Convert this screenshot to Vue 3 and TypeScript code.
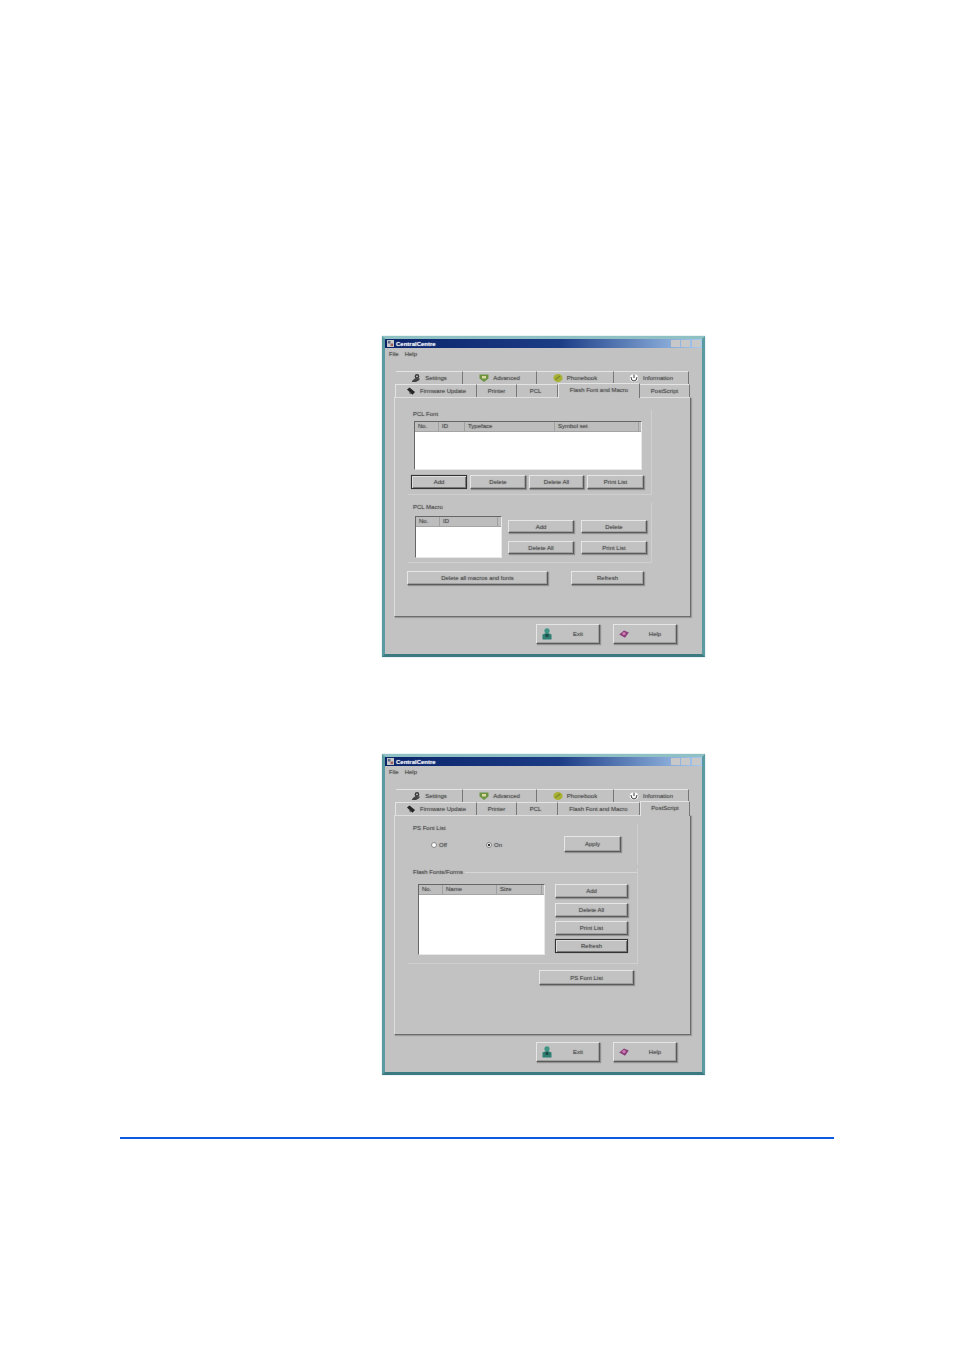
<script setup lang="ts">
interface Tab { label: string; width: number; icon?: string }
const topTabs: Tab[] = [
  { label: 'Settings', width: 67, icon: 'settings' },
  { label: 'Advanced', width: 74, icon: 'advanced' },
  { label: 'Phonebook', width: 77, icon: 'phonebook' },
  { label: 'Information', width: 75, icon: 'info' },
]
const lowerTabs: Tab[] = [
  { label: 'Firmware Update', width: 82, icon: 'firmware' },
  { label: 'Printer', width: 40 },
  { label: 'PCL', width: 41 },
  { label: 'Flash Font and Macro', width: 82 },
  { label: 'PostScript', width: 50 },
]
const windows = [
  { id: 'font', active: 'Flash Font and Macro' },
  { id: 'ps', active: 'PostScript' },
]
const fontCols = [{ t: 'No.', w: 24 }, { t: 'ID', w: 26 }, { t: 'Typeface', w: 90 }, { t: 'Symbol set', w: 84 }]
const macroCols = [{ t: 'No.', w: 24 }, { t: 'ID', w: 58 }]
const flashCols = [{ t: 'No.', w: 24 }, { t: 'Name', w: 54 }, { t: 'Size', w: 45 }]
</script>

<template>
  <div class="page">
    <section v-for="win in windows" :key="win.id" class="window">
      <header class="titlebar">
        <svg class="app-icon" viewBox="0 0 8 8"><rect width="8" height="8" fill="#c8c8c8" /><rect x="1" y="1" width="3" height="3" fill="#5a6a8a" /><rect x="4" y="4" width="3" height="3" fill="#a06060" /></svg>
        <span class="title">CentralCentre</span>
        <span class="controls"><i></i><i></i><i></i></span>
      </header>
      <nav class="menu"><span>File</span><span>Help</span></nav>

      <div class="tabs tabs-top">
        <div v-for="tab in topTabs" :key="tab.label" class="tab" :style="{ width: tab.width + 'px' }">
          <svg v-if="tab.icon === 'settings'" class="tab-icon" viewBox="0 0 10 8"><circle cx="6" cy="2.400" r="2.300" fill="#3a3a3a" /><path d="M1 7 4 4.200h4.500V6L5 8H1Z" fill="#444" /><circle cx="6" cy="2.400" r=".8" fill="#ddd" /></svg>
          <svg v-else-if="tab.icon === 'advanced'" class="tab-icon" viewBox="0 0 10 8"><path d="M.5.5h9v4L5 8 .5 4.500Z" fill="#6d9440" /><path d="M3 2h4v2.500H3Z" fill="#d8d8a0" /></svg>
          <svg v-else-if="tab.icon === 'phonebook'" class="tab-icon" viewBox="0 0 10 8"><ellipse cx="5" cy="4" rx="4.600" ry="4" fill="#a8b034" /><path d="M2.500 5.500 7 2" stroke="#7a8a2a" stroke-width="1.300" /></svg>
          <svg v-else-if="tab.icon === 'info'" class="tab-icon" viewBox="0 0 10 8"><ellipse cx="5" cy="4" rx="4.300" ry="3.800" fill="#f8f8f8" /><path d="M2 3Q2 7 5 7T8 3M5 .5V4" fill="none" stroke="#444" stroke-width="1" /></svg>
          <span>{{ tab.label }}</span>
        </div>
      </div>
      <div class="tabs tabs-lower">
        <div
          v-for="tab in lowerTabs"
          :key="tab.label"
          class="tab"
          :class="{ active: tab.label === win.active }"
          :style="{ width: tab.width + 'px' }"
        >
          <svg v-if="tab.icon === 'firmware'" class="tab-icon" viewBox="0 0 10 8"><path d="M1 2.500 3.500 .5 9 5 6.500 7.800Z" fill="#262626" /><path d="M3 5.500 5 7" stroke="#555" /></svg>
          <span>{{ tab.label }}</span>
        </div>
      </div>

      <main class="panel">
        <template v-if="win.id === 'font'">
          <fieldset class="group font-group">
            <div class="legend">PCL Font</div>
            <div class="list font-list">
              <div class="list-head"><span v-for="c in fontCols" :key="c.t" :style="{ width: c.w + 'px' }">{{ c.t }}</span></div>
            </div>
            <div class="font-actions">
              <button class="btn default add-w">Add</button>
              <button class="btn add-w">Delete</button>
              <button class="btn all-w">Delete All</button>
              <button class="btn print-w">Print List</button>
            </div>
          </fieldset>
          <fieldset class="group macro-group">
            <div class="legend">PCL Macro</div>
            <div class="macro-body">
              <div class="list macro-list">
                <div class="list-head"><span v-for="c in macroCols" :key="c.t" :style="{ width: c.w + 'px' }">{{ c.t }}</span></div>
              </div>
              <div class="macro-actions">
                <button class="btn">Add</button>
                <button class="btn">Delete</button>
                <button class="btn">Delete All</button>
                <button class="btn">Print List</button>
              </div>
            </div>
          </fieldset>
          <div class="wide-actions">
            <button class="btn delete-wide">Delete all macros and fonts</button>
            <button class="btn refresh-wide">Refresh</button>
          </div>
        </template>

        <template v-else>
          <fieldset class="group ps-group">
            <div class="legend">PS Font List</div>
            <div class="radio-row">
              <label class="radio off-w"><i></i>Off</label>
              <label class="radio on-w"><i class="checked"></i>On</label>
              <button class="btn apply">Apply</button>
            </div>
          </fieldset>
          <fieldset class="group flash-group">
            <div class="legend legend-line"><span>Flash Fonts/Forms</span><b></b></div>
            <div class="flash-body">
              <div class="list flash-list">
                <div class="list-head"><span v-for="c in flashCols" :key="c.t" :style="{ width: c.w + 'px' }">{{ c.t }}</span></div>
              </div>
              <div class="flash-actions">
                <button class="btn first">Add</button>
                <button class="btn">Delete All</button>
                <button class="btn">Print List</button>
                <button class="btn default">Refresh</button>
              </div>
            </div>
          </fieldset>
          <button class="btn ps-list">PS Font List</button>
        </template>
      </main>

      <footer class="footer">
        <button class="btn foot">
          <svg class="foot-icon" viewBox="0 0 10 12"><circle cx="5" cy="2.800" r="2.600" fill="#3f9484" /><path d="M.5 11.500V6.500Q5 3.500 9.500 6.500V11.500Z" fill="#2f7f72" /><rect x="3.500" y="6" width="3" height="3" fill="#1f4f4a" /></svg>
          <span>Exit</span>
        </button>
        <button class="btn foot">
          <svg class="foot-icon" viewBox="0 0 10 12"><path d="M.2 6.500 5 2.500 9.800 4.500 6 9.800Z" fill="#8c3f7c" /><circle cx="5" cy="5.500" r="1.600" fill="#d080b0" /></svg>
          <span>Help</span>
        </button>
      </footer>
    </section>
    <hr class="rule" />
  </div>
</template>

<style scoped>
.page {
  height: 1351px;
  overflow: hidden;
  padding-top: 336px;
  box-sizing: border-box;
  background: #fff;
  font-family: "Liberation Sans", Arial, sans-serif;
}
.window {
  width: 323px;
  height: 321px;
  box-sizing: border-box;
  margin: 0 0 97px 382px;
  border: 3px solid;
  border-color: #8fc0c4 #5a9aa0 #3a7a80 #5a9aa0;
  background: #c2c2c2;
  font-size: 6px;
  line-height: 8px;
  color: rgba(40, 40, 40, 0.55);
  text-shadow: 0 0 1px rgba(30, 30, 30, 0.65);
  box-shadow: 0 0 1px #8fb8bc;
}
.titlebar {
  height: 9px;
  display: flex;
  align-items: center;
  padding: 0 1px 0 2px;
  background: linear-gradient(90deg, #0a246a 0%, #1c3c86 55%, #a6caf0 100%);
  color: rgba(255, 255, 255, 0.7);
  text-shadow: 0 0 1px #fff;
}
.app-icon { width: 7px; height: 7px; margin-right: 2px; }
.title { font-weight: 700; flex: 1; }
.controls { display: flex; gap: 1px; }
.controls i { width: 9px; height: 7px; background: #c8c8c8; }
.controls i:nth-child(3) { margin-left: 1px; }
.menu {
  height: 12px;
  display: flex;
  align-items: center;
  gap: 6px;
  padding: 0 4px;
}
.tabs { display: flex; height: 13px; }
.tabs-top { margin: 11px 0 0 11px; }
.tabs-lower { margin: 0 0 0 10px; position: relative; z-index: 1; }
.tab {
  box-sizing: border-box;
  display: flex;
  align-items: center;
  justify-content: center;
  gap: 4px;
  border-top: 1px solid #e4e4e4;
  border-right: 1px solid #777;
  white-space: nowrap;
}
.tabs-lower .tab { padding-bottom: 1px; }
.tabs-lower .tab:first-child { border-left: 1px solid #e4e4e4; }
.tabs-lower .tab:nth-child(3) { padding-right: 3px; }
.tabs-lower .tab.active {
  height: 15px;
  margin-top: -1px;
  padding-bottom: 3px;
  background: #c2c2c2;
  border-left: 1px solid #e4e4e4;
}
.tab-icon { width: 10px; height: 8px; flex: none; }
.panel {
  box-sizing: border-box;
  width: 297px;
  height: 220px;
  margin-left: 9px;
  border: 1px solid;
  border-color: #dedede #6c6c6c #6c6c6c #dedede;
  box-shadow: 1px 1px 1px rgba(0, 0, 0, 0.2);
  overflow: hidden;
}
.group {
  box-sizing: border-box;
  margin: 0;
  padding: 0;
  border: 0;
  min-width: 0;
  border-right: 1px solid #cfcfcf;
  border-bottom: 1px solid #cfcfcf;
}
.legend { height: 8px; padding-left: 5px; }
.legend-line { display: flex; align-items: center; gap: 2px; }
.legend-line b { flex: 1; height: 1px; background: #d6d6d6; }
.list {
  box-sizing: border-box;
  background: #fff;
  border: 1px solid;
  border-color: #666 #e8e8e8 #e8e8e8 #666;
}
.list-head {
  display: flex;
  height: 9px;
  background: #bdbdbd;
  border-bottom: 1px solid #a4a4a4;
}
.list-head span {
  box-sizing: border-box;
  padding-left: 3px;
  border-right: 1px solid #a0a0a0;
  white-space: nowrap;
}
.btn {
  box-sizing: border-box;
  display: block;
  margin: 0;
  padding: 0;
  font: inherit;
  color: inherit;
  text-shadow: inherit;
  background: #c2c2c2;
  border: 1px solid;
  border-color: #e6e6e6 #5a5a5a #5a5a5a #e6e6e6;
  box-shadow: inset -1px -1px 0 #a0a0a0, 1px 1px 1px rgba(0, 0, 0, 0.25);
}
.btn.default { border-color: #333; box-shadow: inset 1px 1px 0 #ddd, inset -1px -1px 0 #777, 0 0 1px rgba(0, 0, 0, 0.4); }

.font-group { width: 244px; height: 85px; margin: 12px 0 0 13px; }
.font-list { width: 228px; height: 49px; margin: 3px 0 0 6px; }
.font-actions { display: flex; gap: 3px; margin: 5px 0 0 3px; }
.font-actions .btn { height: 14px; }
.add-w { width: 56px; }
.all-w { width: 55px; }
.print-w { width: 57px; }
.macro-group { width: 244px; height: 60px; margin: 8px 0 0 13px; }
.macro-body { display: flex; }
.macro-list { width: 87px; height: 42px; margin: 5px 0 0 7px; }
.macro-actions {
  display: grid;
  grid-template-columns: 66px 66px;
  grid-auto-rows: 13px;
  column-gap: 7px;
  row-gap: 8px;
  margin: 9px 0 0 6px;
}
.wide-actions { display: flex; gap: 23px; margin: 8px 0 0 12px; }
.wide-actions .btn { height: 14px; }
.delete-wide { width: 141px; }
.refresh-wide { width: 73px; }

.ps-group { width: 230px; height: 41px; margin: 8px 0 0 13px; border-bottom: 0; }
.radio-row { display: flex; align-items: center; height: 16px; margin-top: 4px; padding-left: 23px; }
.radio { display: flex; align-items: center; gap: 2px; margin-top: 2px; }
.off-w { width: 55px; }
.on-w { width: 78px; }
.radio i {
  box-sizing: border-box;
  width: 6px;
  height: 6px;
  border-radius: 50%;
  background: #fff;
  border: 1px solid #888;
}
.radio i.checked { background: radial-gradient(circle, #333 35%, #eee 55%); }
.apply { width: 57px; height: 16px; }
.flash-group { width: 230px; height: 96px; margin: 3px 0 0 13px; }
.flash-body { display: flex; margin-top: 8px; }
.flash-list { width: 127px; height: 71px; margin-left: 10px; }
.flash-actions { display: flex; flex-direction: column; gap: 4px; width: 73px; margin-left: 10px; }
.flash-actions .btn { height: 14px; }
.flash-actions .first { margin-bottom: 1px; }
.ps-list { width: 95px; height: 15px; margin: 6px 0 0 144px; }

.footer { display: flex; gap: 13px; margin: 7px 0 0 151px; }
.foot {
  width: 64px;
  height: 20px;
  display: flex;
  align-items: center;
  padding-left: 5px;
}
.foot span { flex: 1; text-align: center; padding-left: 5px; }
.foot-icon { width: 10px; height: 12px; flex: none; }
.rule {
  width: 714px;
  height: 2px;
  margin: -35px 0 0 120px;
  border: 0;
  background: #0b5be0;
}
</style>
